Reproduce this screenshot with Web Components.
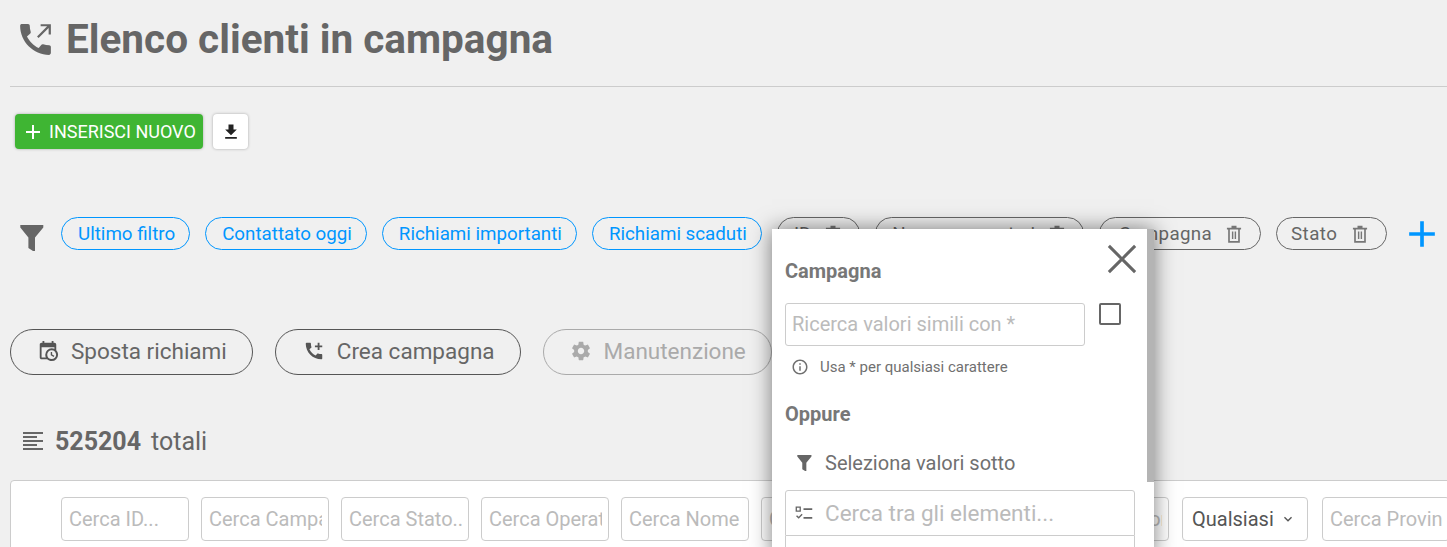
<!DOCTYPE html>
<html lang="it">
<head>
<meta charset="utf-8">
<title>Elenco clienti in campagna</title>
<style>
    html, body { margin: 0; height: 547px; overflow: hidden; background: #f0f0f0; }
    body { font-family: Roboto, "Liberation Sans", sans-serif; color: #666; }
</style>
</head>
<body>
<campaign-page></campaign-page>

<script>
const ICONS = {
    phoneOut: '<path d="M20.01 15.38c-1.23 0-2.42-.2-3.53-.56-.35-.12-.74-.03-1.01.24l-1.57 1.97c-2.83-1.35-5.48-3.9-6.89-6.83l1.95-1.66c.27-.28.35-.67.24-1.02-.37-1.11-.56-2.3-.56-3.53 0-.54-.45-.99-.99-.99H4.19C3.65 3 3 3.24 3 3.99 3 13.28 10.73 21 20.01 21c.71 0 .99-.63.99-1.18v-3.45c0-.54-.45-.99-.99-.99z"/><path d="M15 3v1.300h3.800l-5.900 5.900.9.9 5.900-5.900V9H21V3z"/>',
    plus: '<path d="M19 13h-6v6h-2v-6H5v-2h6V5h2v6h6z"/>',
    download: '<path d="M19 9h-4V3H9v6H5l7 7 7-7zM5 18v2h14v-2H5z"/>',
    trash: '<path fill-rule="evenodd" d="M9 2h6v2.500h5.500v2H19v16H5v-16H3.500v-2H9zM7 6.500v14h10v-14z"/><path d="M9.500 9h1.700v9H9.500zM12.800 9h1.700v9h-1.700z"/>',
    calClock: '<path d="M15 13h1.500v2.820l2.440 1.410-.75 1.300L15 16.690V13M19 8H5v11h4.670C9.240 18.090 9 17.070 9 16a7 7 0 0 1 7-7c1.070 0 2.090.240 3 .670V8M5 21c-1.110 0-2-.9-2-2V5c0-1.110.89-2 2-2h1V1h2v2h8V1h2v2h1a2 2 0 0 1 2 2v6.100c1.240 1.260 2 2.990 2 4.900a7 7 0 0 1-7 7c-1.910 0-3.640-.76-4.900-2H5m11-9.850A4.850 4.850 0 0 0 11.150 16c0 2.680 2.170 4.850 4.850 4.850A4.850 4.850 0 0 0 20.850 16c0-2.680-2.170-4.850-4.850-4.850z"/>',
    phonePlus: '<path d="M20.01 15.38c-1.230 0-2.420-.2-3.530-.56-.35-.12-.74-.03-1.010.24l-1.570 1.970c-2.830-1.350-5.480-3.900-6.890-6.830l1.950-1.660c.27-.28.35-.67.24-1.020-.37-1.110-.56-2.300-.56-3.530 0-.54-.45-.99-.99-.99H4.190C3.650 3 3 3.240 3 3.990 3 13.280 10.730 21 20.010 21c.71 0 .99-.63.99-1.180v-3.450c0-.54-.45-.99-.99-.99z"/><path d="M16 3h2v3h3v2h-3v3h-2V8h-3V6h3z"/>',
    cog: '<path d="M19.430 12.980c.04-.32.07-.64.07-.98s-.03-.66-.07-.98l2.110-1.650c.19-.15.24-.42.12-.64l-2-3.460c-.12-.22-.39-.3-.61-.22l-2.490 1c-.52-.4-1.080-.73-1.690-.98l-.38-2.650C14.460 2.180 14.250 2 14 2h-4c-.25 0-.46.18-.49.42l-.38 2.650c-.61.25-1.170.59-1.690.98l-2.490-1c-.23-.09-.49 0-.61.22l-2 3.460c-.13.22-.07.49.12.64l2.110 1.650c-.04.32-.07.65-.07.98s.03.66.07.98l-2.110 1.650c-.19.15-.24.42-.12.64l2 3.460c.12.22.39.3.61.22l2.490-1c.52.4 1.080.73 1.690.98l.38 2.650c.03.24.24.42.49.42h4c.25 0 .46-.18.49-.42l.38-2.650c.61-.25 1.170-.59 1.690-.98l2.490 1c.23.09.49 0 .61-.22l2-3.460c.12-.22.07-.49-.12-.64l-2.110-1.650zM12 15.500c-1.930 0-3.500-1.570-3.500-3.500s1.570-3.500 3.500-3.500 3.500 1.570 3.500 3.500-1.570 3.500-3.500 3.500z"/>',
    lines: '<path d="M2 3h20v2H2zM2 7h14v2H2zM2 11h20v2H2zM2 15h14v2H2zM2 19h20v2H2z"/>',
    info: '<path d="M11 7h2v2h-2zm0 4h2v6h-2zm1-9C6.480 2 2 6.480 2 12s4.480 10 10 10 10-4.480 10-10S17.520 2 12 2zm0 18c-4.410 0-8-3.590-8-8s3.590-8 8-8 8 3.590 8 8-3.590 8-8 8z"/>',
    close: '<path d="M3.500 2L12 10.500 20.500 2 22 3.500 13.500 12 22 20.500 20.500 22 12 13.500 3.500 22 2 20.500 10.500 12 2 3.500z"/>',
    checklist: '<path fill-rule="evenodd" d="M3 4h6v6H3zm1.500 1.500v3h3v-3z"/><path d="M12 6h10v2H12zM12 16h10v2H12zM3.500 15l1.100-1.100 1.900 1.900 3.400-3.400L11 13.500 6.500 18z"/>',
    chevron: '<path d="M7.400 8.600L12 13.200l4.600-4.600L18 10l-6 6-6-6z"/>'
};

function svgIcon(name, size, color) {
    return `<svg width="${size}" height="${size}" viewBox="0 0 24 24" fill="${color || 'currentColor'}" style="display:block;flex:none">${ICONS[name]}</svg>`;
}

// funnel is not square, so it gets its own viewBox
function funnelIcon(w, h) {
    return `<svg width="${w}" height="${h}" viewBox="0 0 24 26" fill="currentColor" style="display:block;flex:none"><path d="M.3 0h23v2.500L15 12.500V26h-2L8.400 23V12.500L.3 2.500z"/></svg>`;
}

// chip of the filter row, blue = saved filter, grey = active field with trash
class FilterChip extends HTMLElement {
    constructor() {
        super();
        const removable = this.hasAttribute('removable');
        this.attachShadow({ mode: 'open' }).innerHTML = `
<style>
    :host {
        display: inline-flex;
        align-items: center;
        flex: none;
        box-sizing: border-box;
        height: 33px;
        padding: 0 ${removable ? '16px' : '14px'} 0 16px;
        gap: 12px;
        border: 1px solid ${removable ? '#666' : '#0096ff'};
        border-radius: 17px;
        color: ${removable ? '#666' : '#0096ff'};
        font-size: 18.75px;
        white-space: nowrap;
    }
    svg { color: #777; }
</style>
<slot></slot>${removable ? svgIcon('trash', 20) : ''}`;
    }
}
customElements.define('filter-chip', FilterChip);

class ActionPill extends HTMLElement {
    constructor() {
        super();
        const off = this.hasAttribute('disabled');
        this.attachShadow({ mode: 'open' }).innerHTML = `
<style>
    :host {
        display: inline-flex;
        align-items: center;
        box-sizing: border-box;
        height: 46px;
        padding: 0 25px 2px 26px;
        gap: 12px;
        border: 1px solid ${off ? '#aaa' : '#555'};
        border-radius: 23px;
        color: ${off ? '#aaa' : '#666'};
        font-size: 22.5px;
        white-space: nowrap;
    }
    svg { color: ${off ? '#aaa' : '#555'}; }
</style>
${svgIcon(this.getAttribute('icon'), 22)}<slot></slot>`;
    }
}
customElements.define('action-pill', ActionPill);

class SearchBox extends HTMLElement {
    constructor() {
        super();
        this.attachShadow({ mode: 'open' }).innerHTML = `
<style>
    :host {
        display: block;
        box-sizing: border-box;
        flex: none;
        width: 128px;
        height: 44px;
        padding: 0 6px 0 7px;
        background: #fff;
        border: 1px solid #ccc;
        border-radius: 4px;
        color: #bbb;
        font-size: 20px;
        line-height: 42px;
    }
    div { overflow: hidden; white-space: nowrap; }
</style>
<div><slot></slot></div>`;
    }
}
customElements.define('search-box', SearchBox);

class SelectBox extends HTMLElement {
    constructor() {
        super();
        this.attachShadow({ mode: 'open' }).innerHTML = `
<style>
    :host {
        display: flex;
        align-items: center;
        justify-content: space-between;
        box-sizing: border-box;
        flex: none;
        width: 126px;
        height: 44px;
        margin: 0 2px 0 1px;
        padding: 0 11px 0 9px;
        background: #fff;
        border: 1px solid #ccc;
        border-radius: 4px;
        color: #555;
        font-size: 20px;
    }
</style>
<slot></slot>${svgIcon('chevron', 16)}`;
    }
}
customElements.define('select-box', SelectBox);

class PageTitle extends HTMLElement {
    constructor() {
        super();
        this.attachShadow({ mode: 'open' }).innerHTML = `
<style>
    :host {
        display: flex;
        align-items: center;
        gap: 10px;
        box-sizing: border-box;
        height: 87px;
        margin-left: 10px;
        padding: 0 0 8px 5px;
        border-bottom: 1px solid #ccc;
        color: #666;
        font-size: 40.5px;
        font-weight: 700;
    }
</style>
${svgIcon('phoneOut', 41)}<slot></slot>`;
    }
}
customElements.define('page-title', PageTitle);

class NewToolbar extends HTMLElement {
    constructor() {
        super();
        this.attachShadow({ mode: 'open' }).innerHTML = `
<style>
    :host { display: flex; gap: 10px; padding: 27px 0 0 15px; }
    .add {
        display: flex;
        align-items: center;
        gap: 4px;
        box-sizing: border-box;
        width: 188px;
        height: 35px;
        padding-left: 6px;
        background: #3fb533;
        border-radius: 4px;
        box-shadow: 0 0 3px rgba(0,0,0,.3);
        color: #fff;
        font-size: 18px;
        white-space: nowrap;
    }
    .dl {
        display: flex;
        align-items: center;
        justify-content: center;
        width: 35px;
        height: 35px;
        background: #fff;
        border-radius: 4px;
        box-shadow: 0 0 3px rgba(0,0,0,.3);
        color: #222;
    }
</style>
<div class="add">${svgIcon('plus', 24)}<span>INSERISCI NUOVO</span></div>
<div class="dl">${svgIcon('download', 20)}</div>`;
    }
}
customElements.define('new-toolbar', NewToolbar);

class FilterRow extends HTMLElement {
    constructor() {
        super();
        this.attachShadow({ mode: 'open' }).innerHTML = `
<style>
    :host { display: flex; align-items: center; gap: 15px; margin-top: 68px; padding-left: 20px; }
    .funnel { box-sizing: border-box; height: 33px; padding-top: 8px; margin-right: 2px; color: #666; }
    .add { margin: -6px 0 -6px -2px; color: #0096ff; }
</style>
<div class="funnel">${funnelIcon(24, 26)}</div>
<slot></slot>
<div class="add">${svgIcon('plus', 44)}</div>`;
    }
}
customElements.define('filter-row', FilterRow);

class PillRow extends HTMLElement {
    constructor() {
        super();
        this.attachShadow({ mode: 'open' }).innerHTML = `
<style>
    :host { display: flex; gap: 22px; margin-top: 79px; padding-left: 10px; }
</style>
<slot></slot>`;
    }
}
customElements.define('pill-row', PillRow);

class TotalLine extends HTMLElement {
    constructor() {
        super();
        this.attachShadow({ mode: 'open' }).innerHTML = `
<style>
    :host { display: flex; align-items: center; gap: 10px; margin-top: 50px; padding-left: 21px; height: 32px; font-size: 25px; color: #666; }
    b { font-weight: 700; }
</style>
${svgIcon('lines', 24)}<b><slot name="count"></slot></b><slot></slot>`;
    }
}
customElements.define('total-line', TotalLine);

class ResultsTable extends HTMLElement {
    constructor() {
        super();
        this.attachShadow({ mode: 'open' }).innerHTML = `
<style>
    :host {
        display: flex;
        gap: 12px;
        box-sizing: border-box;
        width: 1600px;
        height: 100px;
        margin: 23px 0 0 10px;
        padding: 16px 0 0 50px;
        background: #fff;
        border: 1px solid #ccc;
        border-radius: 4px;
    }
</style>
<slot></slot>`;
    }
}
customElements.define('results-table', ResultsTable);

// popover opened on the Campagna field, lies over the rest of the page
class FieldPopover extends HTMLElement {
    constructor() {
        super();
        this.attachShadow({ mode: 'open' }).innerHTML = `
<style>
    :host {
        position: absolute;
        left: 772px;
        top: 229px;
        display: flex;
        width: 382px;
        height: 330px;
        background: #fff;
        box-shadow: 0 0 20px rgba(0,0,0,.5);
        color: #777;
    }
    .body { position: relative; flex: 1; padding: 0 0 0 13px; }
    .bar { width: 7px; height: 253px; background: #b4b4b4; }
    h4 { margin: 0; font-size: 20px; font-weight: 700; line-height: 22px; color: #777; }
    .close { position: absolute; left: 333px; top: 13px; color: #666; }
    .title { padding-top: 31px; }
    .likeRow { display: flex; gap: 14px; margin-top: 21px; }
    .like {
        box-sizing: border-box;
        width: 300px;
        height: 43px;
        padding: 0 6px;
        border: 1px solid #ccc;
        border-radius: 3px;
        color: #bbb;
        font-size: 20px;
        line-height: 41px;
    }
    .check { box-sizing: border-box; width: 22px; height: 22px; border: 2px solid #666; border-radius: 2px; }
    .hint { display: flex; align-items: center; gap: 11px; margin-top: 11px; padding-left: 6px; font-size: 15px; color: #707070; height: 20px; }
    .or { margin-top: 26px; }
    .pick { display: flex; align-items: center; gap: 13px; margin-top: 26px; padding-left: 12px; font-size: 20px; color: #707070; height: 24px; }
    .pick svg { color: #666; }
    .find {
        display: flex;
        align-items: center;
        gap: 11px;
        box-sizing: border-box;
        width: 350px;
        height: 46px;
        margin-top: 15px;
        padding-left: 7px;
        border: 1px solid #ccc;
        border-radius: 3px 3px 0 0;
        color: #bbb;
        font-size: 22.5px;
    }
    .find svg { color: #666; }
    .list { box-sizing: border-box; width: 350px; height: 40px; border: 1px solid #ccc; border-top: 0; }
</style>
<div class="body">
    <div class="close">${svgIcon('close', 34)}</div>
    <h4 class="title">Campagna</h4>
    <div class="likeRow">
        <div class="like">Ricerca valori simili con *</div>
        <div class="check"></div>
    </div>
    <div class="hint">${svgIcon('info', 18)}<span>Usa * per qualsiasi carattere</span></div>
    <h4 class="or">Oppure</h4>
    <div class="pick">${funnelIcon(15, 16)}<span>Seleziona valori sotto</span></div>
    <div class="find">${svgIcon('checklist', 21)}<span>Cerca tra gli elementi...</span></div>
    <div class="list"></div>
</div>
<div class="bar"></div>`;
    }
}
customElements.define('field-popover', FieldPopover);

class CampaignPage extends HTMLElement {
    constructor() {
        super();
        this.attachShadow({ mode: 'open' }).innerHTML = `
<style>
    :host { display: block; position: relative; width: 1447px; height: 547px; overflow: hidden; }
    .numero { letter-spacing: -.25px; }
    .camp { padding-left: 19px; padding-right: 16px; letter-spacing: .3px; }
    .stato { padding-left: 14px; letter-spacing: .5px; }
    .crea { padding-left: 27px; }
</style>
<page-title>Elenco clienti in campagna</page-title>
<new-toolbar></new-toolbar>
<filter-row>
    <filter-chip>Ultimo filtro</filter-chip>
    <filter-chip>Contattato oggi</filter-chip>
    <filter-chip>Richiami importanti</filter-chip>
    <filter-chip>Richiami scaduti</filter-chip>
    <filter-chip removable>ID</filter-chip>
    <filter-chip removable class="numero">Numero operatori</filter-chip>
    <filter-chip removable class="camp">Campagna</filter-chip>
    <filter-chip removable class="stato">Stato</filter-chip>
</filter-row>
<pill-row>
    <action-pill icon="calClock">Sposta richiami</action-pill>
    <action-pill icon="phonePlus" class="crea">Crea campagna</action-pill>
    <action-pill icon="cog" disabled>Manutenzione</action-pill>
</pill-row>
<total-line><span slot="count">525204</span>totali</total-line>
<results-table>
    <search-box>Cerca ID...</search-box>
    <search-box>Cerca Campagna...</search-box>
    <search-box>Cerca Stato...</search-box>
    <search-box>Cerca Operatore...</search-box>
    <search-box>Cerca Nome</search-box>
    <search-box>Cerca Cognome...</search-box>
    <search-box>Cerca Email...</search-box>
    <search-box>Cerca Telefono...</search-box>
    <select-box>Qualsiasi</select-box>
    <search-box>Cerca Provincia...</search-box>
</results-table>
<field-popover></field-popover>`;
    }
}
customElements.define('campaign-page', CampaignPage);
</script>
</body>
</html>
